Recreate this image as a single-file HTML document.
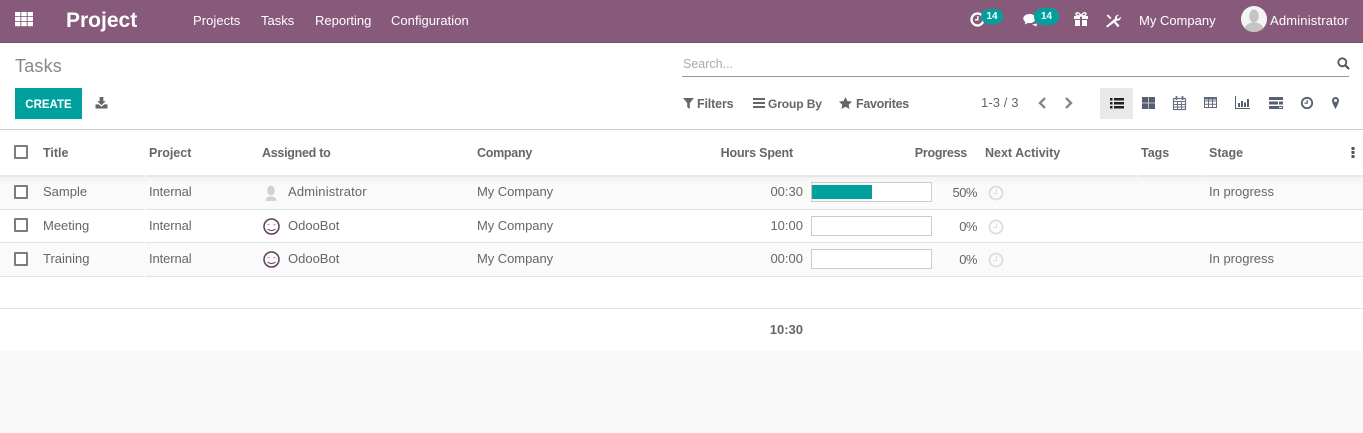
<!DOCTYPE html>
<html><head><meta charset="utf-8"><title>Tasks</title>
<style>
html,body{margin:0;padding:0;width:1363px;height:433px;overflow:hidden;background:#f9f9f9}
body{position:relative;font-family:"Liberation Sans",sans-serif;font-size:13px;color:#666}
.a{position:absolute;white-space:nowrap;line-height:16px}
.r{text-align:right}
.n{color:#fff}
.h{font-weight:bold;color:#666;font-size:12.5px}
.b{position:absolute;left:0;width:1363px}
.cb{position:absolute;left:14px;width:10px;height:10px;border:2px solid #7c7c7c;background:#fff;border-radius:1px}
.pg{position:absolute;left:811px;width:119px;height:18px;border:1px solid #ccc;background:#fff}
svg{position:absolute;overflow:visible}
</style></head><body>

<div class="b" style="top:0;height:43px;background:#875a7b;border-bottom:0"></div>
<div class="b" style="top:42px;height:1px;background:#7b5170"></div>
<div class="b" style="top:43px;height:87px;background:#fff"></div>
<div class="b" style="top:129px;height:1px;background:#ccc"></div>
<div class="b" style="top:130px;height:46px;background:#fff"></div>
<div class="b" style="top:175px;height:2px;background:#e6e6e6"></div>
<div class="b" style="top:177px;height:32px;background:linear-gradient(#f2f2f2 0,#fafafa 8px)"></div>
<div class="b" style="top:209px;height:1px;background:#e2e2ea"></div>
<div class="b" style="top:210px;height:32px;background:#fff"></div>
<div class="b" style="top:242px;height:1px;background:#e2e2ea"></div>
<div class="b" style="top:243px;height:33px;background:#fafafa"></div>
<div class="b" style="top:276px;height:1px;background:#e2e2ea"></div>
<div class="b" style="top:277px;height:31px;background:#fff"></div>
<div class="b" style="top:308px;height:1px;background:#e2e2ea"></div>
<div class="b" style="top:309px;height:42px;background:#fff"></div>
<svg style="left:0;top:0" width="1363" height="433" fill="#fff"><path d="M144 175h1v2h-1zM144 209h1v1h-1zM144 242h1v1h-1zM144 276h1v1h-1zM1137 175h1v2h-1zM1205 175h1v2h-1z"/></svg>

<!-- navbar -->
<svg style="left:15px;top:12px" width="18" height="14" viewBox="0 0 18 14" fill="#fff">
<rect x="0" y="0" width="5.400" height="4.200"/><rect x="6.300" y="0" width="5.400" height="4.200"/><rect x="12.600" y="0" width="5.400" height="4.200"/>
<rect x="0" y="5" width="5.400" height="4.200"/><rect x="6.300" y="5" width="5.400" height="4.200"/><rect x="12.600" y="5" width="5.400" height="4.200"/>
<rect x="0" y="10" width="5.400" height="4.200"/><rect x="6.300" y="10" width="5.400" height="4.200"/><rect x="12.600" y="10" width="5.400" height="4.200"/>
</svg>
<div class="a n" style="left:66px;top:8px;font-size:21px;line-height:26px;font-weight:bold">Project</div>
<div class="a n" style="left:193px;top:13px;letter-spacing:.05px">Projects</div>
<div class="a n" style="left:261px;top:13px">Tasks</div>
<div class="a n" style="left:315px;top:13px">Reporting</div>
<div class="a n" style="left:391px;top:13px;letter-spacing:.03px">Configuration</div>

<svg style="left:970px;top:11px" width="16" height="16" viewBox="0 0 16 16" fill="none" stroke="#fff">
<circle cx="7.500" cy="8.500" r="6" stroke-width="2.300"/><path d="M7.800 5v3.800H5" stroke-width="1.400"/>
</svg>
<div class="a" style="left:981px;top:9px;width:22px;height:15px;border-radius:8px;background:#00a09d;color:#fff;font-size:10px;font-weight:bold;line-height:15px;text-align:center">14</div>
<svg style="left:1023px;top:13px" width="18" height="14" viewBox="0 0 18 14" fill="#fff">
<ellipse cx="6.500" cy="5.500" rx="6.200" ry="4.600"/><path d="M3 8l-1.500 3.500L7 9z"/><path d="M9 11.500l4.500 2 .5-3z"/>
</svg>
<div class="a" style="left:1034px;top:8px;width:25px;height:17px;border-radius:9px;background:#00a09d;color:#fff;font-size:10px;font-weight:bold;line-height:17px;text-align:center">14</div>
<svg style="left:1074px;top:12px" width="14" height="14" viewBox="0 0 14 14" fill="#fff">
<rect x="0" y="4" width="14" height="3"/><rect x="1" y="8" width="5" height="6"/><rect x="8" y="8" width="5" height="6"/><rect x="6" y="4" width="2" height="3" fill="#875a7b"/>
<path d="M7 4C5 0 2 0 2 2s3 2 5 2zM7 4c2-4 5-4 5-2s-3 2-5 2z" fill="none" stroke="#fff" stroke-width="1.400"/>
</svg>
<svg style="left:1106px;top:14px" width="14" height="14" viewBox="0 0 14 14" fill="#fff">
<path d="M1.200 13.500L0 12.300 9 4.500C8.700 2.500 10.500.3 13 .8l-2.300 2.300.4 1.400 1.400.4L14.800 2.600c.4 2.700-1.800 4.300-3.800 4z"/>
<path d="M.5 1.500L2 .5l3.500 3.500L4.200 5.300zM8 8.800l1.600-1.400 3.900 4.300-1.600 1.600z"/>
</svg>
<div class="a n" style="left:1139px;top:13px">My Company</div>
<svg style="left:1241px;top:6px" width="26" height="26" viewBox="0 0 26 26">
<circle cx="13" cy="13" r="13" fill="#f4f4f4"/>
<ellipse cx="13" cy="10" rx="4.800" ry="6.500" fill="#c4c4c4"/>
<path d="M3.500 22c2-4 5-4.800 7-5.500h5c2 .7 5 1.500 7 5.500a13 13 0 0 1-19 0z" fill="#c4c4c4"/>
</svg>
<div class="a n" style="left:1270px;top:13px;letter-spacing:.17px">Administrator</div>

<!-- control panel -->
<div class="a" style="left:15px;top:56px;font-size:18px;line-height:21px;color:#888;letter-spacing:.2px">Tasks</div>
<div class="a" style="left:15px;top:88px;width:67px;height:31px;background:#00a09d;color:#fff;font-size:11.500px;font-weight:bold;line-height:32px;text-align:center"><span style="position:relative;top:.5px">CREATE</span></div>
<svg style="left:95px;top:97px" width="13" height="12" viewBox="0 0 13 13" fill="#666">
<path d="M4.500 0h4v4.500h2.500L6.500 9 2 4.500h2.500z"/><path d="M0 8h3.500l3 2.500 3-2.500H13v4.500H0z"/>
</svg>

<div class="a" style="left:683px;top:56px;font-size:12.500px;color:#aaa">Search...</div>
<div class="b" style="left:682px;width:667px;top:76px;height:1px;background:#999"></div>
<svg style="left:1337px;top:57px" width="13" height="13" viewBox="0 0 13 13" fill="none" stroke="#555">
<circle cx="5.300" cy="5.300" r="4" stroke-width="1.800"/><path d="M8.300 8.300L12 12" stroke-width="2.200"/>
</svg>

<svg style="left:683px;top:98px" width="11" height="11" viewBox="0 0 11 11" fill="#666"><path d="M0 0h11L6.800 5v6L4.200 9V5z"/></svg>
<div class="a h" style="left:697px;top:96px;letter-spacing:-.15px">Filters</div>
<svg style="left:753px;top:98px" width="12" height="10" viewBox="0 0 12 10" fill="#666"><rect width="12" height="2"/><rect y="4" width="12" height="2"/><rect y="8" width="12" height="2"/></svg>
<div class="a h" style="left:768px;top:96px;font-size:12px;letter-spacing:-.1px">Group By</div>
<svg style="left:839px;top:97px" width="13" height="12" viewBox="0 0 13 12" fill="#666"><path d="M6.500 0l1.900 4 4.600.6-3.300 3.100.8 4.300-4-2.200-4 2.200.8-4.300L0 4.600 4.600 4z"/></svg>
<div class="a h" style="left:856px;top:96px;letter-spacing:-.3px">Favorites</div>

<div class="a" style="left:981px;top:95px;letter-spacing:.1px">1-3 / 3</div>
<svg style="left:1037px;top:97px" width="10" height="12" viewBox="0 0 10 12" fill="none" stroke="#888" stroke-width="2.400"><path d="M8 1L3 6l5 5"/></svg>
<svg style="left:1064px;top:97px" width="10" height="12" viewBox="0 0 10 12" fill="none" stroke="#888" stroke-width="2.400"><path d="M2 1l5 5-5 5"/></svg>

<div class="a" style="left:1100px;top:88px;width:33px;height:31px;background:#e9e9e9"></div>
<svg style="left:1110px;top:98px" width="14" height="11" viewBox="0 0 14 11" fill="#222"><rect y="0" width="2.500" height="2.500"/><rect y="4" width="2.500" height="2.500"/><rect y="8" width="2.500" height="2.500"/><rect x="4" y="0" width="10" height="2.500"/><rect x="4" y="4" width="10" height="2.500"/><rect x="4" y="8" width="10" height="2.500"/></svg>
<svg style="left:1142px;top:97px" width="13" height="12" viewBox="0 0 13 12" fill="#555f70"><rect width="6.200" height="5.700"/><rect x="6.800" width="6.200" height="5.700"/><rect y="6.300" width="6.200" height="5.700"/><rect x="6.800" y="6.300" width="6.200" height="5.700"/></svg>
<svg style="left:1173px;top:96px" width="13" height="14" viewBox="0 0 13 14" fill="none" stroke="#6b7485"><rect x=".5" y="2.500" width="12" height="11" stroke-width="1.200"/><path d="M.5 5.500h12M.5 8.500h12M.5 11h12M4.500 5.500v8M8.500 5.500v8"/><path d="M3.500 0v4M9.500 0v4" stroke-width="1.800"/></svg>
<svg style="left:1204px;top:97px" width="13" height="12" viewBox="0 0 13 12" fill="none" stroke="#5f6a7c"><rect x=".5" y=".5" width="12" height="10"/><path d="M.5 4h12M.5 7.300h12M4.500 .5v10M8.500 .5v10"/><path d="M.5 1.500h12" stroke-width="2"/></svg>
<svg style="left:1235px;top:96px" width="15" height="13" viewBox="0 0 15 13" fill="#555f70"><rect y="0" width="1" height="12"/><rect y="12" width="15" height="1"/><rect x="3" y="7" width="2" height="4"/><rect x="6" y="5" width="2" height="6"/><rect x="9" y="6.500" width="2" height="4.500"/><rect x="12" y="3" width="2" height="8"/></svg>
<svg style="left:1269px;top:97px" width="14" height="12" viewBox="0 0 14 12" fill="#555f70"><rect width="14" height="3"/><rect y="4.500" width="9" height="3"/><rect x="10" y="4.500" width="4" height="3"/><rect y="9" width="14" height="3"/><rect x="10" y="10" width="3" height="1" fill="#fff"/></svg>
<svg style="left:1301px;top:97px" width="12" height="12" viewBox="0 0 12 12" fill="none" stroke="#555f70"><circle cx="6" cy="6" r="5.200" stroke-width="1.800"/><path d="M6.200 3v3.200H3.500" stroke-width="1.200"/></svg>
<svg style="left:1332px;top:97px" width="7" height="12" viewBox="0 0 7 12" fill="#555f70"><path fill-rule="evenodd" d="M3.500 0A3.500 3.500 0 0 1 7 3.500C7 6 3.500 12 3.500 12S0 6 0 3.500A3.500 3.500 0 0 1 3.500 0zm0 2a1.500 1.500 0 1 0 0 3 1.500 1.500 0 0 0 0-3z"/></svg>

<!-- table header -->
<div class="cb" style="top:145px"></div>
<div class="a h" style="left:43px;top:145px">Title</div>
<div class="a h" style="left:149px;top:145px">Project</div>
<div class="a h" style="left:262px;top:145px;letter-spacing:-.28px">Assigned to</div>
<div class="a h" style="left:477px;top:145px;letter-spacing:-.28px">Company</div>
<div class="a h r" style="left:693px;width:100px;top:145px;letter-spacing:-.18px">Hours Spent</div>
<div class="a h r" style="left:867px;width:100px;top:145px;letter-spacing:-.25px">Progress</div>
<div class="a h" style="left:985px;top:145px">Next Activity</div>
<div class="a h" style="left:1141px;top:145px">Tags</div>
<div class="a h" style="left:1209px;top:145px">Stage</div>
<svg style="left:1351px;top:147px" width="4" height="11" viewBox="0 0 4 11" fill="#555"><rect x=".5" width="3" height="3"/><rect x=".5" y="4" width="3" height="3"/><rect x=".5" y="8" width="3" height="3"/></svg>

<!-- rows -->
<div class="cb" style="top:185px"></div>
<div class="a" style="left:43px;top:184px">Sample</div>
<div class="a" style="left:149px;top:184px;letter-spacing:-.1px">Internal</div>
<svg style="left:262px;top:184px" width="18" height="18" viewBox="0 0 18 18"><ellipse cx="9" cy="6.500" rx="3.800" ry="5" fill="#d2d2d2"/><path d="M3.500 17c0-3 2-4 4-4.500h3c2 .5 4 1.500 4 4.500z" fill="#d2d2d2"/></svg>
<div class="a" style="left:288px;top:184px;letter-spacing:.17px">Administrator</div>
<div class="a" style="left:477px;top:184px;letter-spacing:-.05px">My Company</div>
<div class="a r" style="left:743px;width:60px;top:184px">00:30</div>
<div class="pg" style="top:182px"></div>
<div class="a" style="left:812px;top:185px;width:60px;height:14px;background:#00a09d"></div>
<div class="a r" style="left:917px;width:60px;top:185px;letter-spacing:-.5px">50%</div>
<svg style="left:988px;top:185px" width="16" height="16" viewBox="0 0 16 16" fill="none" stroke="#dcdfe2"><circle cx="8" cy="8" r="6.500" stroke-width="2"/><path d="M8.500 4v4.500H5" stroke-width="1"/></svg>
<div class="a" style="left:1209px;top:184px">In progress</div>

<div class="cb" style="top:218px"></div>
<div class="a" style="left:43px;top:218px">Meeting</div>
<div class="a" style="left:149px;top:218px;letter-spacing:-.1px">Internal</div>
<svg style="left:263px;top:218px" width="17" height="17" viewBox="0 0 17 17" fill="none" stroke="#5f3a5c"><circle cx="8.500" cy="8.500" r="7.500" stroke-width="1.500"/><path d="M4.500 11c2.500 2 5.500 2 8 0" stroke-width=".9"/><path d="M4.500 6.800h2M10.500 6.800h2" stroke-width=".7"/></svg>
<div class="a" style="left:288px;top:218px">OdooBot</div>
<div class="a" style="left:477px;top:218px;letter-spacing:-.05px">My Company</div>
<div class="a r" style="left:743px;width:60px;top:218px">10:00</div>
<div class="pg" style="top:216px"></div>
<div class="a r" style="left:917px;width:60px;top:219px;letter-spacing:-.5px">0%</div>
<svg style="left:988px;top:219px" width="16" height="16" viewBox="0 0 16 16" fill="none" stroke="#dcdfe2"><circle cx="8" cy="8" r="6.500" stroke-width="2"/><path d="M8.500 4v4.500H5" stroke-width="1"/></svg>

<div class="cb" style="top:252px"></div>
<div class="a" style="left:43px;top:251px">Training</div>
<div class="a" style="left:149px;top:251px;letter-spacing:-.1px">Internal</div>
<svg style="left:263px;top:251px" width="17" height="17" viewBox="0 0 17 17" fill="none" stroke="#5f3a5c"><circle cx="8.500" cy="8.500" r="7.500" stroke-width="1.500"/><path d="M4.500 11c2.500 2 5.500 2 8 0" stroke-width=".9"/><path d="M4.500 6.800h2M10.500 6.800h2" stroke-width=".7"/></svg>
<div class="a" style="left:288px;top:251px">OdooBot</div>
<div class="a" style="left:477px;top:251px;letter-spacing:-.05px">My Company</div>
<div class="a r" style="left:743px;width:60px;top:251px">00:00</div>
<div class="pg" style="top:249px"></div>
<div class="a r" style="left:917px;width:60px;top:252px;letter-spacing:-.5px">0%</div>
<svg style="left:988px;top:252px" width="16" height="16" viewBox="0 0 16 16" fill="none" stroke="#dcdfe2"><circle cx="8" cy="8" r="6.500" stroke-width="2"/><path d="M8.500 4v4.500H5" stroke-width="1"/></svg>
<div class="a" style="left:1209px;top:251px">In progress</div>

<div class="a r" style="left:743px;width:60px;top:322px;font-weight:bold">10:30</div>

</body></html>
